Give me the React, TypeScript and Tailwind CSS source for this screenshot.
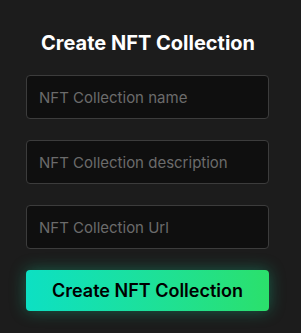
const fields = [
  "NFT Collection name",
  "NFT Collection description",
  "NFT Collection Url",
];

const App = () => {
  return (
    <div className="min-h-screen w-full bg-[#1c1c1c] font-['Inter','Noto_Sans',sans-serif]">
      <div className="w-[243px] ml-[26px] pt-[28px] flex flex-col">
        <h1 className="text-center text-[20px] font-bold text-white leading-[30px] pl-[1px]">
          Create NFT Collection
        </h1>
        <form className="mt-[17px] flex flex-col gap-[21px]">
          {fields.map((f) => (
            <input
              key={f}
              type="text"
              placeholder={f}
              className="h-[44px] w-full rounded-[4px] border border-[#3c3c3c] bg-[#0f0f0f] px-3 text-[15px] text-white placeholder:text-[#6b6b6b] outline-none"
            />
          ))}
        </form>
        <button className="mt-[21px] h-[41px] w-full rounded-[4px] bg-gradient-to-r from-[#0de0c3] to-[#2be06b] text-[18px] font-semibold text-black shadow-[0_0_16px_rgba(16,224,160,0.35)]">
          Create NFT Collection
        </button>
      </div>
    </div>
  );
};

export default App;
